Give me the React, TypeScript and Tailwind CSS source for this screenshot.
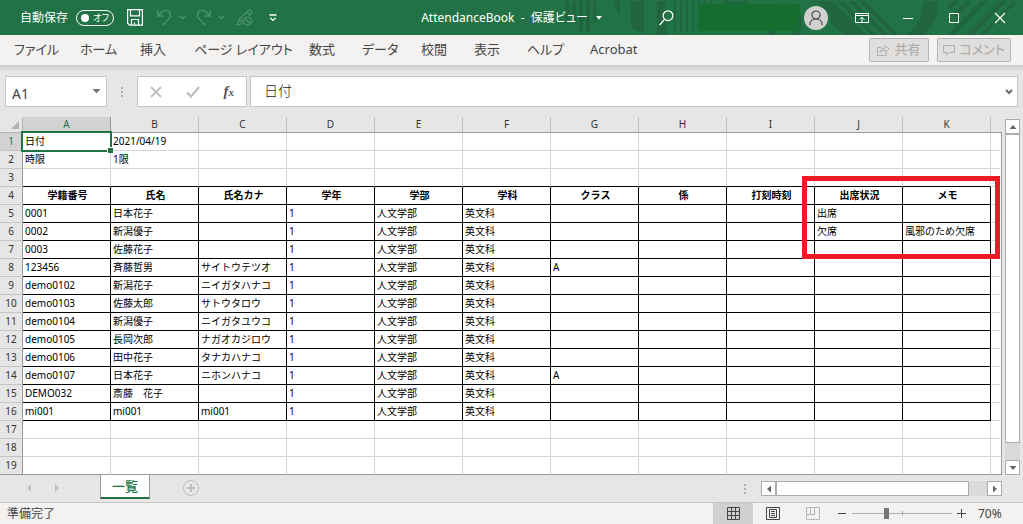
import React from "react";

const uiFont = "font-['Noto_Sans','Noto_Sans_CJK_JP',sans-serif]";

const columns = ["A", "B", "C", "D", "E", "F", "G", "H", "I", "J", "K"];

const headings = ["学籍番号", "氏名", "氏名カナ", "学年", "学部", "学科", "クラス", "係", "打刻時刻", "出席状況", "メモ"];

function student(id: string, name: string, kana = "", klass = "", status = "", memo = ""): string[] {
  return [id, name, kana, "1", "人文学部", "英文科", klass, "", "", status, memo];
}

const rows: string[][] = [
  ["日付", "2021/04/19"],
  ["時限", "1限"],
  [],
  headings,
  student("0001", "日本花子", "", "", "出席"),
  student("0002", "新潟優子", "", "", "欠席", "風邪のため欠席"),
  student("0003", "佐藤花子"),
  student("123456", "斉藤哲男", "サイトウテツオ", "A"),
  student("demo0102", "新潟花子", "ニイガタハナコ"),
  student("demo0103", "佐藤太郎", "サトウタロウ"),
  student("demo0104", "新潟優子", "ニイガタユウコ"),
  student("demo0105", "長岡次郎", "ナガオカジロウ"),
  student("demo0106", "田中花子", "タナカハナコ"),
  student("demo0107", "日本花子", "ニホンハナコ", "A"),
  student("DEMO032", "斎藤　花子"),
  student("mi001", "mi001", "mi001"),
  [],
  [],
  [],
];

const menus = ["ファイル", "ホーム", "挿入", "ページ レイアウト", "数式", "データ", "校閲", "表示", "ヘルプ", "Acrobat"];

function TitlePattern() {
  return (
    <svg className="absolute inset-y-0 right-0 h-full w-[463px]" viewBox="560 0 463 35" fill="#20653f" aria-hidden="true">
      <path d="M565 1h4v22h-4zM572 1h4v22h-4zM579 1h4v30h-4zM586 1h4v31h-4zM593 1h3v22h-3zM613 1h7v14zM631 1h13v33l-13-7zM657 1h9v34h-9zM674 1h2v32h-2zM680 1h2v31h-2zM686 1h2v31h-2zM692 1h2v29h-2zM698 1h2v5h-2zM704 1h2v5h-2zM710 1h2v5h-2zM722 1h27l-5 5h-18z" />
      <path d="M770 35a20 20 0 0 1 5-30c12-6 24 0 26 12v18h-9c3-14-2-20-10-20-9 0-13 10-6 20z" />
      <path d="M816 1h16l35 34h-16zM837 1h6l34 34h-6zM848 1h6l34 34h-6zM859 1h6l34 34h-6zM831 16l19 19h-6l-13-12z" />
      <path d="M923 1h15c0 15-5 26-14 34h-18c11-7 17-18 17-34z" />
      <path d="M947 6l5-5h7l-9 9zM953 14l13-13h7l-17 17zM952 30l29-29h7l-34 34h-7zM966 35l34-34h7l-34 34zM980 35l34-34h4l-34 34z" />
    </svg>
  );
}

function WindowButton({ label, children }: { label: string; children: React.ReactNode }) {
  return (
    <button aria-label={label} className="flex h-full w-[46px] items-center justify-center">
      <svg width="14" height="14" viewBox="0 0 14 14" fill="none" stroke="white" shapeRendering="geometricPrecision">
        {children}
      </svg>
    </button>
  );
}

function TinyChevron() {
  return (
    <svg width="7" height="5" viewBox="0 0 7 5" fill="none" stroke="#4f9470" strokeWidth="1.3">
      <path d="M.7 1l2.8 2.6L6.3 1" />
    </svg>
  );
}

function TitleBar() {
  return (
    <header className="relative h-[35px] bg-[#217346] text-xs text-white">
      <TitlePattern />
      <div className="relative grid h-full grid-cols-[1fr_auto_1fr] items-center">
        <div className="flex items-center pl-5">
          <span className="w-14">自動保存</span>
          <button role="switch" aria-checked="false" aria-label="自動保存" className="flex h-4 w-[38px] items-center justify-between rounded-full border border-white px-1">
            <span className="size-2 rounded-full bg-white" />
            <span className="text-[9px] leading-none [font-feature-settings:'palt']">オフ</span>
          </button>
          <button aria-label="上書き保存" className="ml-[13px]">
            <svg width="16" height="17" viewBox="0 0 16 17" fill="none" stroke="white" strokeWidth="1.2">
              <path d="M.6.6h14.8v15.6H2.6l-2-2zM3.500.8v6h9v-6M4.500 16v-5.500h7V16M7.500 16v-2.500" />
            </svg>
          </button>
          <button aria-label="元に戻す" className="ml-[14px] flex items-center gap-[6px]">
            <svg width="16" height="17" viewBox="0 0 16 17" fill="none" stroke="#4f9470" strokeWidth="1.3">
              <path d="M.7 1v6h6M1 6.700l4-3.900c2-1.800 5-1.800 7 0s2 5 0 7L5.500 16.300" />
            </svg>
            <TinyChevron />
          </button>
          <button aria-label="やり直し" className="ml-[10px] flex items-center gap-[6px]">
            <svg width="16" height="17" viewBox="0 0 16 17" fill="none" stroke="#4f9470" strokeWidth="1.3">
              <path d="M14.300 1v6h-6M14 6.700l-4-3.900c-2-1.800-5-1.800-7 0s-2 5 0 7l6.500 6.500" />
            </svg>
            <TinyChevron />
          </button>
          <button aria-label="インク" className="ml-[11px]">
            <svg width="17" height="17" viewBox="0 0 17 17" fill="none" stroke="#4f9470" strokeWidth="1.200">
              <path d="M1 16l2-5.500L12.500 1.500c1.500-1 4 1 3 3L13 7M3 10.500l3 2.500-1 2-4 1M11 3l3 3" />
              <circle cx="11.500" cy="12" r="4" />
              <path d="M8.800 9.300l5.400 5.400" />
            </svg>
          </button>
          <button aria-label="クイック アクセス ツール バーのユーザー設定" className="ml-4">
            <svg width="8" height="8" viewBox="0 0 8 8" fill="none" stroke="white" strokeWidth="1.300">
              <path d="M.5 1h7M1.200 3.800L4 6.400l2.800-2.600" />
            </svg>
          </button>
        </div>
        <h1 className="flex items-center whitespace-pre [font-feature-settings:'palt']">
          <span>AttendanceBook&nbsp; -&nbsp; 保護ビュー</span>
          <svg className="ml-2" width="6" height="4" viewBox="0 0 6 4" fill="white"><path d="M0 0h6L3 3.500z" /></svg>
        </h1>
        <div className="flex h-full items-center justify-end">
          <button aria-label="検索">
            <svg width="15" height="16" viewBox="0 0 15 16" fill="none" stroke="white" strokeWidth="1.300">
              <circle cx="9" cy="5.700" r="4.800" />
              <path d="M5.500 9.300L.7 15" />
            </svg>
          </button>
          <div className="ml-6 h-[27px] w-[101px] bg-[#166d30]" />
          <button aria-label="アカウント" className="mr-[11px] ml-[5px] flex size-6 items-end justify-center rounded-full bg-[#d2d0ce]">
            <svg width="24" height="24" viewBox="0 0 24 24" fill="none" stroke="#444" strokeWidth="1.200">
              <circle cx="12" cy="9" r="4" />
              <path d="M5.700 19c.3-4 3-6 6.300-6s6 2 6.300 6" />
            </svg>
          </button>
          <WindowButton label="リボンの表示オプション">
            <path d="M.5 2.500h13v9H.5zM.5 4.500h13M7 11V6.500M4.800 8.500L7 6.300l2.200 2.200" />
          </WindowButton>
          <WindowButton label="最小化"><path d="M2 7.500h10" /></WindowButton>
          <WindowButton label="最大化"><path d="M2.500 2.500h9v9h-9z" /></WindowButton>
          <WindowButton label="閉じる"><path d="M2 2l10 10M12 2L2 12" strokeWidth="1.200" /></WindowButton>
        </div>
      </div>
    </header>
  );
}

function Ribbon() {
  return (
    <nav className="flex h-[30px] items-center bg-[#f3f2f1] pr-3 pl-[14px] text-[13px] text-[#444]">
      <ul className="grid grid-cols-[66px_60px_54px_115px_53px_59px_53px_53px_63px_60px] whitespace-nowrap [font-feature-settings:'palt']">
        {menus.map((m) => (
          <li key={m}><button>{m}</button></li>
        ))}
      </ul>
      <div className="ml-auto flex gap-2 font-medium text-[#b1afad] [font-feature-settings:'palt']">
        <button disabled className="flex h-6 w-[60px] items-center justify-center gap-1 rounded-xs border border-[#b8b6b4] bg-[#e1dfdd]">
          <svg width="13" height="12" viewBox="0 0 13 12" fill="none" stroke="currentColor">
            <path d="M4 3.500H.5v8h9V8.500M3 8.500c.5-3 2-4.500 5-4.500V1l4 4-4 3.500V6C6 6 4.500 6.500 3 8.500z" />
          </svg>
          共有
        </button>
        <button disabled className="flex h-6 w-[74px] items-center justify-center gap-1 rounded-xs border border-[#b8b6b4] bg-[#e1dfdd]">
          <svg width="12" height="12" viewBox="0 0 12 12" fill="none" stroke="currentColor">
            <path d="M.5 1.500h11v7H6L3.500 11V8.500h-3z" />
          </svg>
          コメント
        </button>
      </div>
    </nav>
  );
}

function Dots() {
  return (
    <div className="flex flex-col gap-[2px]">
      <i className="size-[2px] bg-[#b0b0b0]" />
      <i className="size-[2px] bg-[#b0b0b0]" />
      <i className="size-[2px] bg-[#b0b0b0]" />
    </div>
  );
}

function FormulaBar() {
  return (
    <section className="flex items-center bg-linear-to-b from-[#cfcfcf] to-[#e6e6e6] to-[7px] pt-[11px] pr-[5px] pb-[10px] pl-[5px]">
      <div className="flex h-[31px] w-[102px] items-center border border-[#c6c6c6] bg-white">
        <input aria-label="名前ボックス" defaultValue="A1" className="w-20 min-w-0 pt-1 pl-[6px] text-sm text-[#444] outline-none" />
        <button aria-label="名前の一覧" className="ml-auto mr-[5px]">
          <svg width="9" height="5" viewBox="0 0 9 5" fill="#777"><path d="M.5 0h8L4.500 4.500z" /></svg>
        </button>
      </div>
      <div className="flex w-[30px] justify-center"><Dots /></div>
      <div className="flex h-[31px] w-[110px] items-center justify-around border border-[#c6c6c6] bg-white">
        <button aria-label="キャンセル">
          <svg width="12" height="12" viewBox="0 0 12 12" stroke="#bdbdbd" strokeWidth="1.800"><path d="M1 1l10 10M11 1L1 11" /></svg>
        </button>
        <button aria-label="入力">
          <svg width="14" height="12" viewBox="0 0 14 12" fill="none" stroke="#bdbdbd" strokeWidth="2.200"><path d="M1 6.500l4 4L13 1" /></svg>
        </button>
        <button aria-label="関数の挿入" className="flex items-baseline font-['Liberation_Serif',serif] text-[15px] leading-none font-bold text-[#555] italic">
          f<span className="text-[11px]">x</span>
        </button>
      </div>
      <div className="ml-[3px] flex h-[31px] flex-1 items-center border border-[#c6c6c6] bg-white">
        <input aria-label="数式バー" defaultValue="日付" className="min-w-0 flex-1 pb-[2px] pl-[13px] text-sm font-light text-[#222] outline-none" />
        <button aria-label="数式バーの展開" className="mr-1">
          <svg width="8" height="6" viewBox="0 0 8 6" fill="none" stroke="#666" strokeWidth="2"><path d="M1 1l3 3 3-3" /></svg>
        </button>
      </div>
    </section>
  );
}

function bottomLine(r: number) {
  if (r === rows.length - 1) return "border-b-[#999]";
  return r >= 2 && r <= 15 ? "border-b-black" : "border-b-[#d4d4d4]";
}

function Sheet() {
  return (
    <div className="min-w-0 flex-1">
      <table className="w-full table-fixed border-separate border-spacing-0 text-[10px] leading-[17px] text-black">
        <colgroup>
          <col className="w-[23px]" />
          {columns.map((c) => <col key={c} className="w-[88px]" />)}
          <col />
        </colgroup>
        <thead>
          <tr className="h-4 bg-[#e6e6e6] leading-[15px] text-[#333]">
            <th className="border-r border-b border-[#b5b5b5] p-0">
              <svg className="mr-[3px] ml-auto" width="8" height="8" viewBox="0 0 8 8" fill="#b4b4b4"><path d="M8 0v8H0z" /></svg>
            </th>
            {columns.map((c, i) => (
              <th key={c} scope="col" className={`border-r border-b p-0 font-normal ${i === 0 ? "border-[#999] bg-[#d2d2d2] text-[#217346]" : "border-r-[#bdbdbd] border-b-[#999]"}`}>
                {c}
              </th>
            ))}
            <th className="border-b border-[#999] p-0" />
          </tr>
        </thead>
        <tbody className="bg-white">
          {rows.map((row, r) => {
            const boxed = r >= 3 && r <= 15;
            return (
              <tr key={r} className="h-[18px]">
                <th scope="row" className={`border-r border-b border-r-[#999] p-0 font-normal ${r === rows.length - 1 ? "border-b-[#999]" : "border-b-[#c4c4c4]"} ${r === 0 ? "bg-[#d2d2d2] text-[#217346]" : "bg-[#e6e6e6] text-[#333]"}`}>
                  {r + 1}
                </th>
                {columns.map((c, i) => (
                  <td
                    key={c}
                    className={`relative border-r border-b py-0 pr-0 pl-[2px] whitespace-nowrap ${boxed ? "border-r-black" : "border-r-[#d4d4d4]"} ${bottomLine(r)} ${r === 3 ? "text-center font-bold" : ""}`}
                  >
                    {row[i]}
                    {r === 0 && i === 0 && (
                      <span className="absolute -inset-[2px] z-10 border-2 border-[#217346]">
                        <span className="absolute -right-[3px] -bottom-[3px] size-[6px] border-t border-l border-white bg-[#217346]" />
                      </span>
                    )}
                    {r === 3 && i === 9 && (
                      <span className="absolute -top-[11px] -left-[13px] z-10 h-[83px] w-[198px] border-[5px] border-[#ed1c24]" />
                    )}
                  </td>
                ))}
                <td className={`border-r border-b border-r-[#999] p-0 ${r === rows.length - 1 ? "border-b-[#999]" : "border-b-[#d4d4d4]"}`} />
              </tr>
            );
          })}
        </tbody>
      </table>
    </div>
  );
}

const scrollButton = "flex size-[15px] shrink-0 items-center justify-center border border-[#ababab] bg-white";

function Arrow({ d }: { d: string }) {
  return <svg width="8" height="8" viewBox="0 0 8 8" fill="#666"><path d={d} /></svg>;
}

function VerticalScroll() {
  return (
    <div className="mx-[3px] mt-[2px] flex w-[15px] flex-col bg-[#dadada]">
      <button aria-label="上へスクロール" className={scrollButton}><Arrow d="M.5 6L4 2l3.500 4z" /></button>
      <div className="h-[309px] border border-[#ababab] bg-white" />
      <button aria-label="下へスクロール" className={`${scrollButton} mt-auto`}><Arrow d="M.5 2L4 6l3.500-4z" /></button>
    </div>
  );
}

function SheetTabs() {
  return (
    <div className="flex h-[27px] items-start bg-[#e6e6e6]">
      <div className="flex h-[26px] w-[100px] items-center gap-[22px] pl-[26px]">
        <button aria-label="前のシート"><svg width="6" height="8" viewBox="0 0 6 8" fill="#bdbdbd"><path d="M5 0v8L1 4z" /></svg></button>
        <button aria-label="次のシート"><svg width="6" height="8" viewBox="0 0 6 8" fill="#bdbdbd"><path d="M1 0v8l4-4z" /></svg></button>
      </div>
      <button className="-mt-px h-[25px] w-[50px] border-x border-b-2 border-x-[#999] border-b-[#217346] bg-white text-[13px] leading-[24px] font-medium text-[#217346]">一覧</button>
      <button aria-label="新しいシート" className="mt-1 ml-8">
        <svg width="18" height="18" viewBox="0 0 18 18" fill="none" stroke="#bdbdbd"><circle cx="9" cy="9" r="7.500" /><path d="M9 5v8M5 9h8" strokeWidth="2" /></svg>
      </button>
      <div className="mt-[6px] mr-[21px] ml-auto flex items-center">
        <div className="mr-[15px]"><Dots /></div>
        <div className="flex w-[241px] bg-[#dadada]">
          <button aria-label="左へスクロール" className={scrollButton}><Arrow d="M6 .5v7L2 4z" /></button>
          <div className="w-[193px] border border-[#ababab] bg-white" />
          <button aria-label="右へスクロール" className={`${scrollButton} ml-auto`}><Arrow d="M2 .5v7L6 4z" /></button>
        </div>
      </div>
    </div>
  );
}

function StatusBar() {
  return (
    <footer className="flex h-[22px] items-center border-t border-[#c6c6c6] bg-[#f3f2f1] pl-[7px] text-xs text-[#444]">
      <span>準備完了</span>
      <div className="ml-auto flex h-full items-center">
        <button aria-label="標準" className="flex h-full w-10 items-center justify-center bg-[#d2d0ce]">
          <svg width="13" height="13" viewBox="0 0 13 13" fill="none" stroke="#444"><path d="M.5.5h12v12H.5zM4.500.5v12M8.500.5v12M.5 4.500h12M.5 8.500h12" /></svg>
        </button>
        <button aria-label="ページ レイアウト" className="flex h-full w-10 items-center justify-center">
          <svg width="14" height="13" viewBox="0 0 14 13" fill="none" stroke="#444"><path d="M.5.5h13v12H.5zM3.500 2.500h7v8h-7zM5 4.500h4M5 6.500h4M5 8.500h4" /></svg>
        </button>
        <button aria-label="改ページ プレビュー" className="flex h-full w-10 items-center justify-center">
          <svg width="14" height="13" viewBox="0 0 14 13" fill="none" stroke="#b5b5b5"><path d="M.5.5h13v12H.5zM.5 7.500h8v-7M4.500.5v7" /></svg>
        </button>
        <button aria-label="縮小" className="ml-[5px]"><svg width="9" height="9" viewBox="0 0 9 9" stroke="#444"><path d="M0 4.500h8" /></svg></button>
        <div className="relative mx-[5px] flex h-4 w-[100px] items-center">
          <span className="absolute left-[50px] h-[5px] w-px bg-[#b0b0b0]" />
          <input
            type="range"
            aria-label="ズーム"
            defaultValue={34}
            className="relative h-px w-full appearance-none bg-[#b0b0b0] [&::-webkit-slider-thumb]:h-[11px] [&::-webkit-slider-thumb]:w-[5px] [&::-webkit-slider-thumb]:appearance-none [&::-webkit-slider-thumb]:bg-[#777]"
          />
        </div>
        <button aria-label="拡大"><svg width="9" height="9" viewBox="0 0 9 9" stroke="#444"><path d="M0 4.500h9M4.500 0v9" /></svg></button>
        <button className="w-[57px] pl-3 text-left">70%</button>
      </div>
    </footer>
  );
}

export default function App() {
  return (
    <div className={`flex min-h-screen flex-col bg-[#e6e6e6] ${uiFont}`}>
      <TitleBar />
      <Ribbon />
      <FormulaBar />
      <main className="flex">
        <Sheet />
        <VerticalScroll />
      </main>
      <SheetTabs />
      <StatusBar />
    </div>
  );
}
